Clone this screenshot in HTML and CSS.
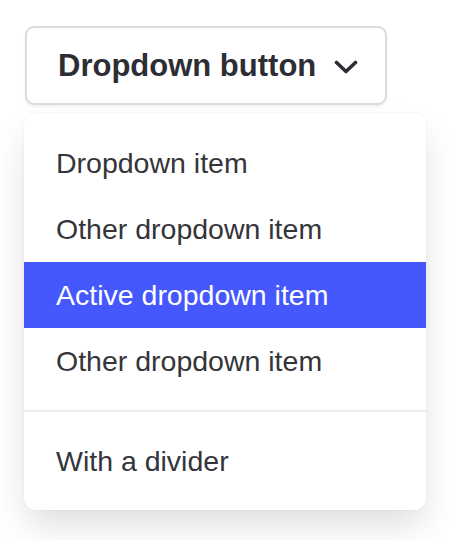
FILE: index.html
```html
<!DOCTYPE html>
<html lang="en">
<head>
    <meta charset="UTF-8">
    <meta name="viewport" content="width=device-width, initial-scale=1.0">
    <title>Dropdown</title>
    <link rel="stylesheet" href="styles.css">
</head>
<body>
    <div class="dropdown">
        <button type="button" class="dropdown-trigger">
            <span>Dropdown button</span>
            <svg class="chevron" width="24" height="14" viewBox="0 0 24 14">
                <path d="M2.5 2.5 L12 11.5 L21.5 2.5" fill="none" stroke="#2d2e34" stroke-width="3.6" stroke-linecap="round" stroke-linejoin="round"/>
            </svg>
        </button>
        <div class="dropdown-menu">
            <a href="#" class="dropdown-item">Dropdown item</a>
            <a href="#" class="dropdown-item">Other dropdown item</a>
            <a href="#" class="dropdown-item is-active">Active dropdown item</a>
            <a href="#" class="dropdown-item">Other dropdown item</a>
            <hr class="dropdown-divider">
            <a href="#" class="dropdown-item">With a divider</a>
        </div>
    </div>
</body>
</html>
```

FILE: styles.css
```css
body {
    margin: 0;
    padding: 26px 0 30px 24px;
    background: #fff;
    font-family: "Liberation Sans", Arial, sans-serif;
    color: #2f3036;
}
.dropdown {
    width: 402px;
}
.dropdown-trigger {
    display: flex;
    align-items: center;
    height: 79px;
    margin-left: 1px;
    padding: 0 27px 0 31px;
    background: #fff;
    border: 2px solid #dcdcde;
    border-radius: 9px;
    box-shadow: 0 2px 3px rgba(10, 10, 10, 0.06);
    font-family: "Liberation Sans", Arial, sans-serif;
    font-weight: bold;
    font-size: 31px;
    color: #2d2e34;
    cursor: pointer;
}
.chevron {
    margin-left: 18px;
    margin-top: 2px;
}
.dropdown-menu {
    margin-top: 8px;
    padding: 17px 0 16px;
    background: #fff;
    border-radius: 12px;
    box-shadow: 0 18px 36px -4px rgba(10, 10, 10, 0.14), 0 0 0 1px rgba(10, 10, 10, 0.02);
}
.dropdown-item {
    display: block;
    height: 66px;
    line-height: 66px;
    padding: 0 32px;
    font-size: 28.5px;
    color: #34353a;
    text-decoration: none;
}
.dropdown-item.is-active {
    background: #4558fe;
    color: #fff;
}
.dropdown-divider {
    height: 2px;
    margin: 16px 0;
    border: 0;
    background: #ededed;
}
```
